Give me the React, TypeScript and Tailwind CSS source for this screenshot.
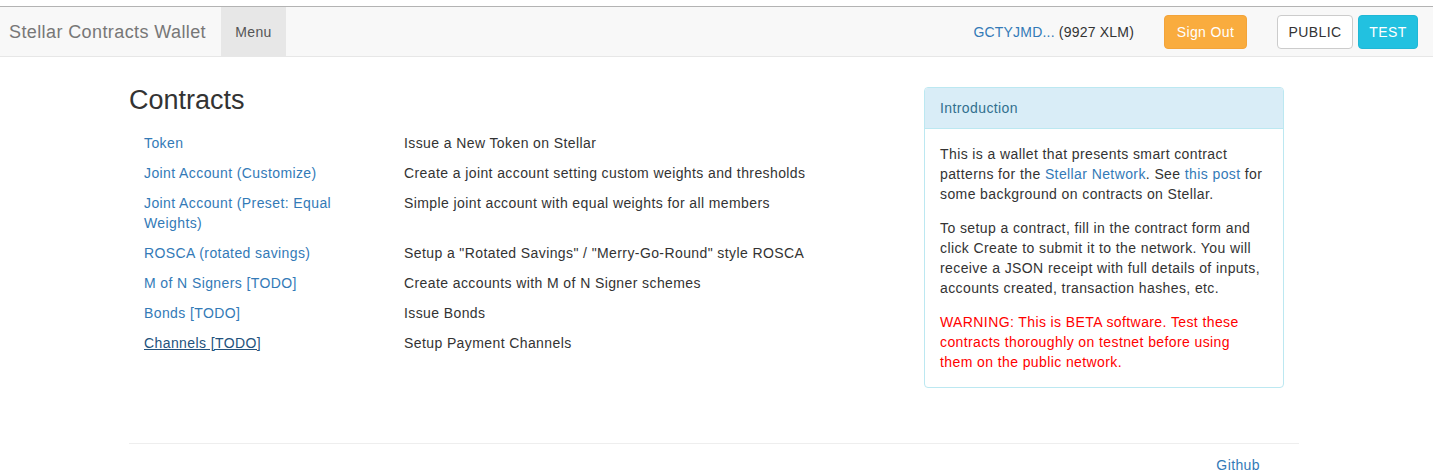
const contracts: { name: string; desc: string; active?: boolean }[] = [
  { name: 'Token', desc: 'Issue a New Token on Stellar' },
  { name: 'Joint Account (Customize)', desc: 'Create a joint account setting custom weights and thresholds' },
  { name: 'Joint Account (Preset: Equal Weights)', desc: 'Simple joint account with equal weights for all members' },
  { name: 'ROSCA (rotated savings)', desc: 'Setup a "Rotated Savings" / "Merry-Go-Round" style ROSCA' },
  { name: 'M of N Signers [TODO]', desc: 'Create accounts with M of N Signer schemes' },
  { name: 'Bonds [TODO]', desc: 'Issue Bonds' },
  { name: 'Channels [TODO]', desc: 'Setup Payment Channels', active: true },
];

function Navbar() {
  return (
    <nav className="h-[51px] bg-[#f8f8f8] border-t border-b border-t-[#b3b3b3] border-b-[#e7e7e7] flex items-stretch">
      <a className="pl-[9px] pr-[15px] flex items-center text-[18px] text-[#777] tracking-[0.4px]">Stellar Contracts Wallet</a>
      <a className="w-[65px] bg-[#e7e7e7] flex items-center justify-center text-[14px] text-[#555]">Menu</a>

      <div className="ml-auto flex items-center pr-[15px]">
        <span className="text-[14px] text-[#333] mr-[30px] tracking-[0.2px]">
          <a className="text-[#337ab7]">GCTYJMD...</a> (9927 XLM)
        </span>
        <button className="h-[34px] w-[83px] rounded-[4px] bg-[#f9ac3e] border border-[#f3a43a] text-white text-[14px] mr-[30px]">
          Sign Out
        </button>
        <button className="h-[34px] w-[76px] rounded-[4px] bg-white border border-[#ccc] text-[#333] text-[14px] mr-[5px]">
          PUBLIC
        </button>
        <button className="h-[34px] w-[60px] rounded-[4px] bg-[#22c1e0] border border-[#1fb8d6] text-white text-[14px]">
          TEST
        </button>
      </div>
    </nav>
  );
}

export default function App() {
  return (
    <div className="bg-white min-h-[472px] text-[14px] leading-[20px] text-[#333] tracking-[0.4px]" style={{ fontFamily: '"Liberation Sans", Arial, sans-serif' }}>
      <div className="h-[6px] bg-white" />
      <Navbar />

      <div className="ml-[129px] w-[1170px]">
        <div className="flex">
          {/* contract list */}
          <div className="w-[780px]">
            <h2 className="mt-[27px] mb-[16px] text-[27px] leading-[33px] font-normal tracking-normal">Contracts</h2>
            <div>
              {contracts.map(c => (
                <div key={c.name} className="flex pb-[10px]">
                  <div className="w-[260px] px-[15px]">
                    <a className={c.active ? 'text-[#23527c] underline' : 'text-[#337ab7]'}>{c.name}</a>
                  </div>
                  <div className="w-[520px] px-[15px]">{c.desc}</div>
                </div>
              ))}
            </div>
          </div>

          {/* intro panel */}
          <div className="w-[390px] px-[15px] pt-[30px]">
            <div className="border border-[#bce8f1] rounded-[4px] overflow-hidden">
              <div className="bg-[#d9edf7] text-[#31708f] px-[15px] py-[10px] border-b border-[#bce8f1]">Introduction</div>
              <div className="p-[15px]">
                <p className="mb-[14px]">
                  This is a wallet that presents smart contract patterns for the{' '}
                  <a className="text-[#337ab7]">Stellar Network</a>. See <a className="text-[#337ab7]">this post</a> for
                  some background on contracts on Stellar.
                </p>
                <p className="mb-[14px]">
                  To setup a contract, fill in the contract form and click Create to submit it to the network. You will
                  receive a JSON receipt with full details of inputs, accounts created, transaction hashes, etc.
                </p>
                <p className="text-[#ff0000]">
                  WARNING: This is BETA software. Test these contracts thoroughly on testnet before using
                  <br />
                  them on the public network.
                </p>
              </div>
            </div>
          </div>
        </div>

        <hr className="mt-[55px] border-t border-[#eee]" />
        <div className="flex justify-end pr-[39px] pt-[11px]">
          <a className="text-[#337ab7]">Github</a>
        </div>
      </div>
    </div>
  );
}
